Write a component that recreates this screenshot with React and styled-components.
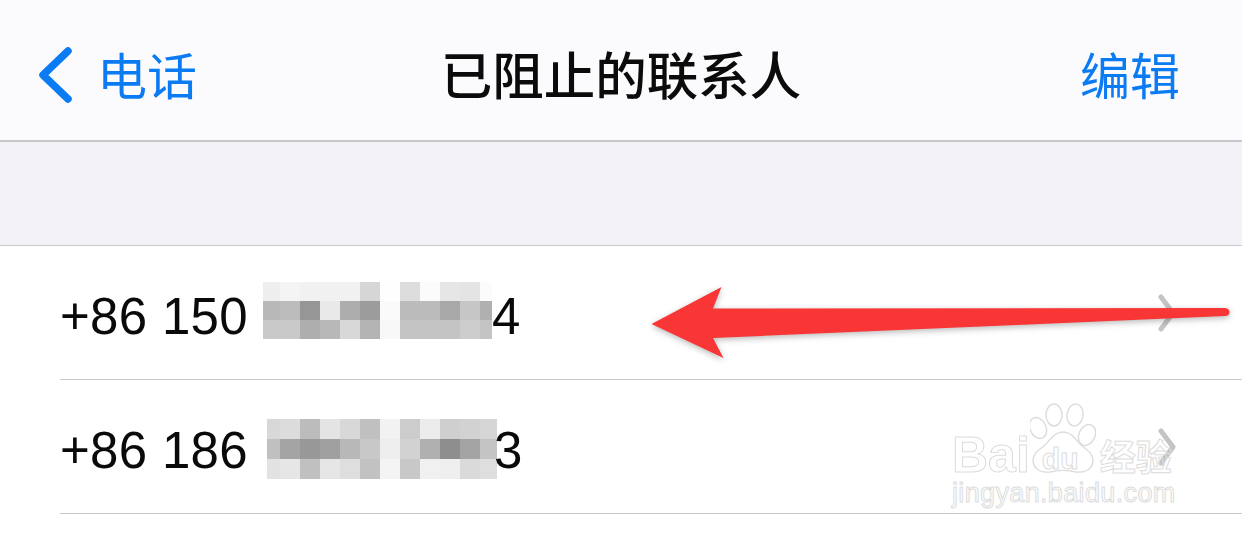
import React from "react";
import styled, { createGlobalStyle } from "styled-components";

const Global = createGlobalStyle`
  html, body { margin: 0; padding: 0; background: #fff; }
  body { font-family: "Liberation Sans", "Noto Sans CJK SC", sans-serif; overflow: hidden; }
`;
const Page = styled.div`
  position: relative;
  width: 1242px;
  height: 537px;
  overflow: hidden;
  background: #fff;
`;
const NavBar = styled.header`
  height: 142px;
  box-sizing: border-box;
  display: grid;
  grid-template-columns: 1fr auto 1fr;
  align-items: center;
  padding: 6px 38px 0 38px;
  background: #fbfbfd;
  border-bottom: 2px solid #c9c9cd;
`;
const BackLink = styled.div`
  display: flex;
  align-items: center;
  gap: 24px;
  color: #0a7bf2;
  font: 400 50px/60px "Noto Sans CJK SC", sans-serif;
`;
const BackIcon = styled.svg`
  margin-top: 6px;
`;
const Title = styled.h1`
  margin: 0;
  color: #0b0b0b;
  font: 500 51.5px/60px "Noto Sans CJK SC", sans-serif;
`;
const EditLink = styled.div`
  justify-self: end;
  margin-right: 24px;
  color: #0a7bf2;
  font: 400 50px/60px "Noto Sans CJK SC", sans-serif;
`;
const Spacer = styled.div`
  height: 104px;
  box-sizing: border-box;
  background: #f2f2f7;
  border-bottom: 1px solid #c9c9cd;
`;
const List = styled.div`
  padding-left: 60px;
`;
const Row = styled.div`
  height: 134px;
  box-sizing: border-box;
  display: flex;
  align-items: center;
  padding: 7px 66px 0 0;
  border-bottom: 1px solid #c8c8cb;
  color: #0a0a0a;
  font-size: 51px;
  letter-spacing: 0.3px;
`;
const Masked = styled.div`
  display: grid;
  grid-template-columns: ${(p) => p.$first}px repeat(10, 20px) ${(p) => p.$last}px;
  grid-auto-rows: ${(p) => p.$rowHeight}px;
  margin: 0 0 ${(p) => p.$lift}px ${(p) => p.$gap}px;
`;
const Pixel = styled.span`
  background: ${(p) => p.$shade};
`;
const LastDigit = styled.span`
  margin-left: ${(p) => p.$pull}px;
`;
const Chevron = styled.svg`
  margin: 0 0 7px auto;
  width: 20px;
  height: 38px;
`;
const ArrowMark = styled.svg`
  position: absolute;
  left: 640px;
  top: 275px;
  filter: drop-shadow(0 2px 3px rgba(0, 0, 0, 0.28));
`;
const Watermark = styled.div`
  position: absolute;
  left: 952px;
  top: 403px;
  width: 240px;
  color: transparent;
  -webkit-text-stroke: 1px #dcdcdc;
`;
const Logo = styled.div`
  display: flex;
  align-items: flex-end;
  height: 73px;
`;
const LogoLatin = styled.span`
  font: 700 50px/42px "Liberation Sans", sans-serif;
`;
const PawBox = styled.div`
  position: relative;
  width: 66px;
  height: 70px;
  margin-bottom: 3px;
`;
const PawLetters = styled.span`
  position: absolute;
  left: 12px;
  top: 41px;
  font: 700 30px/1 "Liberation Sans", sans-serif;
`;
const LogoHan = styled.span`
  margin: 0 0 3px 4px;
  font: 700 36px/1 "Noto Sans CJK SC", sans-serif;
`;
const Domain = styled.div`
  font: 400 27px/34px "Liberation Sans", sans-serif;
  letter-spacing: 0.35px;
  white-space: nowrap;
`;

const firstMask = [
  "#eeeeee","#f4f4f4","#f1f1f1","#f1f1f1","#f1f1f1","#d6d6d6","#fefefe","#dddddd","#fbfbfb","#e6e6e6","#e4e4e4","#fbfbfb",
  "#b8b8b8","#bcbcbc","#969696","#e9e9e9","#adadad","#9c9c9c","#fafafa","#bbbbbb","#bbbbbb","#a8a8a8","#c6c6c6","#b0b0b0",
  "#c9c9c9","#c9c9c9","#aeaeae","#b8b8b8","#d8d8d8","#b4b4b4","#f8f8f8","#c4c4c4","#c4c4c4","#c4c4c4","#cccccc","#c4c4c4",
];
const secondMask = [
  "#d8d8d8","#dcdcdc","#bcbcbc","#e4e4e4","#d8d8d8","#c0c0c0","#f2f2f2","#cccccc","#ececec","#cfcfcf","#d2d2d2","#d6d6d6",
  "#c0c0c0","#a4a4a4","#989898","#a0a0a0","#b8b8b8","#c8c8c8","#eeeeee","#d2d2d2","#b0b0b0","#8e8e8e","#a4a4a4","#c4c4c4",
  "#e2e2e2","#e6e6e6","#c0c0c0","#e6e6e6","#dedede","#c2c2c2","#f4f4f4","#c8c8c8","#f0f0f0","#efefef","#dadada","#dedede",
];

const rows = [
  { prefix: "+86 150", last: "4", mask: firstMask, first: 17, end: 12, gap: 15, rowHeight: 19, lift: 11, pull: 0 },
  { prefix: "+86 186", last: "3", mask: secondMask, first: 13, end: 17, gap: 19, rowHeight: 20, lift: 2, pull: -3 },
];

export default function App() {
  return (
    <Page>
      <Global />
      <NavBar>
        <BackLink>
          <BackIcon width="35" height="58" viewBox="0 0 35 58" fill="none" aria-hidden="true">
            <path d="M30 4 L5 28 L30 52" stroke="#0a7bf2" strokeWidth="7.5" strokeLinecap="round" strokeLinejoin="round" />
          </BackIcon>
          电话
        </BackLink>
        <Title>已阻止的联系人</Title>
        <EditLink>编辑</EditLink>
      </NavBar>
      <Spacer />
      <List>
        {rows.map((r) => (
          <Row key={r.prefix}>
            {r.prefix}
            <Masked $first={r.first} $last={r.end} $gap={r.gap} $rowHeight={r.rowHeight} $lift={r.lift}>
              {r.mask.map((shade, i) => (
                <Pixel key={i} $shade={shade} />
              ))}
            </Masked>
            <LastDigit $pull={r.pull}>{r.last}</LastDigit>
            <Chevron viewBox="0 0 20 38" fill="none" aria-hidden="true">
              <path d="M5 3 L17 19 L5 35" stroke="#c4c4c7" strokeWidth="5" strokeLinecap="round" strokeLinejoin="round" />
            </Chevron>
          </Row>
        ))}
      </List>
      <ArrowMark width="600" height="95" viewBox="0 0 600 95" aria-hidden="true">
        <path
          d="M11.5 49 L81.5 12 L73 33.5 L585 33 Q589.5 33.5 589.5 37 Q589.5 41 585 41 L73 63 L83.5 83 Z"
          fill="#f93636"
        />
      </ArrowMark>
      <Watermark>
        <Logo>
          <LogoLatin>Bai</LogoLatin>
          <PawBox>
            <svg width="66" height="70" viewBox="0 0 66 70" fill="none" stroke="#dcdcdc" strokeWidth="1.4" aria-hidden="true">
              <ellipse cx="8" cy="25" rx="8" ry="11" transform="rotate(-25 8 25)" />
              <ellipse cx="24" cy="12" rx="8" ry="11" />
              <ellipse cx="45" cy="12" rx="8" ry="11" transform="rotate(8 45 12)" />
              <ellipse cx="57" cy="32" rx="8" ry="11" transform="rotate(25 57 32)" />
              <path d="M33 29 C22 29 20 40 10 46 C-2 54 2 71 20 69 C28 67 38 67 46 69 C64 71 68 54 56 46 C46 40 44 29 33 29 Z" />
            </svg>
            <PawLetters>du</PawLetters>
          </PawBox>
          <LogoHan>经验</LogoHan>
        </Logo>
        <Domain>jingyan.baidu.com</Domain>
      </Watermark>
    </Page>
  );
}
